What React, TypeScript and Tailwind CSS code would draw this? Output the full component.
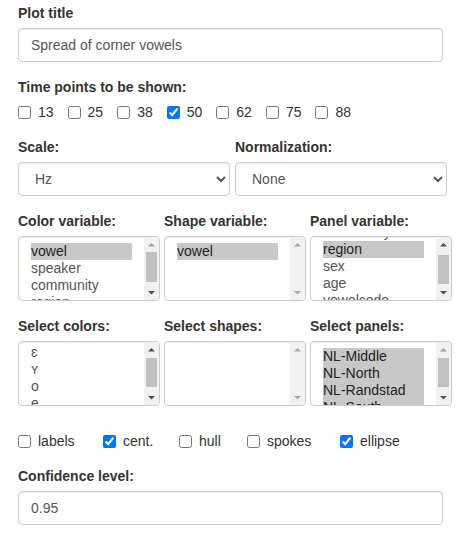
import React from "react";

const timePoints = [
  { v: "13", on: false },
  { v: "25", on: false },
  { v: "38", on: false },
  { v: "50", on: true },
  { v: "62", on: false },
  { v: "75", on: false },
  { v: "88", on: false },
];

const geoms = [
  { label: "labels", on: false, w: "w-[85px]" },
  { label: "cent.", on: true, w: "w-[76px]" },
  { label: "hull", on: false, w: "w-[68px]" },
  { label: "spokes", on: false, w: "w-[93px]" },
  { label: "ellipse", on: true, w: "" },
];

function Label({ children }: { children: React.ReactNode }) {
  return <div className="mb-[5px] text-[14px] leading-5 font-bold text-[#333]">{children}</div>;
}

function Arrow({ up, on }: { up: boolean; on: boolean }) {
  return (
    <svg width="15" height="15" viewBox="0 0 15 15" className="block shrink-0">
      <polygon
        points={up ? "4,9.5 11,9.5 7.5,6" : "4,6 11,6 7.5,9.5"}
        fill={on ? "#505050" : "#a3a3a3"}
      />
    </svg>
  );
}

type ListProps = {
  items: string[];
  selected: string[];
  shift?: string;
  thumb?: string;
  upOn?: boolean;
  downOn?: boolean;
};

function ListBox({ items, selected, shift = "", thumb, upOn = false, downOn = false }: ListProps) {
  return (
    <div className="flex h-[65px] w-[142px] overflow-hidden rounded border border-[#ccc] bg-white shadow-[inset_0_1px_1px_rgba(0,0,0,0.075)]">
      <div className="flex-1 overflow-hidden px-3 pt-1.5">
        <div className={shift}>
          {items.map((it) => {
            const sel = selected.includes(it);
            return (
              <div
                key={it}
                className={`h-[17px] whitespace-nowrap text-[14px] leading-4 ${sel ? "bg-[#c8c8c8] text-[#222]" : "text-[#555]"}`}
              >
                {it}
              </div>
            );
          })}
        </div>
      </div>
      {/* scrollbar */}
      <div className="flex w-[15px] flex-col bg-[#f1f1f1]">
        <Arrow up on={upOn} />
        <div className="flex-1 px-[2px]">
          {thumb && <div className={`bg-[#c1c1c1] ${thumb}`} />}
        </div>
        <Arrow up={false} on={downOn} />
      </div>
    </div>
  );
}

const inputCls =
  "h-[34px] rounded border border-[#ccc] bg-white px-3 text-[14px] leading-5 text-[#555] shadow-[inset_0_1px_1px_rgba(0,0,0,0.075)]";

export default function App() {
  return (
    <div className="min-h-screen bg-white pl-[18px] pt-[3px] font-['Liberation_Sans','DejaVu_Sans',Arial,sans-serif] text-[14px] text-[#333]">
      <Label>Plot title</Label>
      <input className={`${inputCls} block w-[425px]`} defaultValue="Spread of corner vowels" />

      <div className="mt-[15px]">
        <Label>Time points to be shown:</Label>
        <div className="flex h-5 items-center gap-[14px]">
          {timePoints.map((t) => (
            <label key={t.v} className="flex items-center gap-[7px] leading-5">
              <input type="checkbox" defaultChecked={t.on} className="m-0 h-[13px] w-[13px]" />
              <span>{t.v}</span>
            </label>
          ))}
        </div>
      </div>

      <div className="mt-[15px] flex gap-[5px]">
        <div className="w-[212px]">
          <Label>Scale:</Label>
          <select className={`${inputCls} block w-[212px]`} defaultValue="Hz">
            <option>Hz</option>
            <option>Bark</option>
            <option>ERB</option>
          </select>
        </div>
        <div className="w-[212px]">
          <Label>Normalization:</Label>
          <select className={`${inputCls} block w-[212px]`} defaultValue="None">
            <option>None</option>
            <option>Lobanov</option>
            <option>Nearey</option>
          </select>
        </div>
      </div>

      <div className="mt-[15px] grid grid-cols-[146px_146px_146px]">
        <div>
          <Label>Color variable:</Label>
          <ListBox
            items={["vowel", "speaker", "community", "region", "sex"]}
            selected={["vowel"]}
            thumb="mt-0 h-[30px]"
            downOn
          />
        </div>
        <div>
          <Label>Shape variable:</Label>
          <ListBox items={["vowel"]} selected={["vowel"]} />
        </div>
        <div>
          <Label>Panel variable:</Label>
          <ListBox
            items={["speaker", "community", "region", "sex", "age", "vowelcode"]}
            selected={["region"]}
            shift="-mt-[36px]"
            thumb="mt-[3px] h-[29px]"
            upOn
            downOn
          />
        </div>
      </div>

      <div className="mt-[15px] grid grid-cols-[146px_146px_146px]">
        <div>
          <Label>Select colors:</Label>
          <ListBox
            items={["ɛ", "ʏ", "o", "e", "i", "u"]}
            selected={[]}
            shift="-mt-[4px]"
            thumb="mt-[1px] h-[29px]"
            upOn
            downOn
          />
        </div>
        <div>
          <Label>Select shapes:</Label>
          <ListBox items={[]} selected={[]} />
        </div>
        <div>
          <Label>Select panels:</Label>
          <ListBox
            items={["NL-Middle", "NL-North", "NL-Randstad", "NL-South", "VL-Brabant"]}
            selected={["NL-Middle", "NL-North", "NL-Randstad", "NL-South"]}
            thumb="mt-[1px] h-[29px]"
            downOn
          />
        </div>
      </div>

      <div className="mt-[25px] flex h-5 items-center">
        {geoms.map((g) => (
          <label key={g.label} className={`flex items-center gap-[7px] leading-5 ${g.w}`}>
            <input type="checkbox" defaultChecked={g.on} className="m-0 h-[13px] w-[13px]" />
            <span>{g.label}</span>
          </label>
        ))}
      </div>

      <div className="mt-[15px]">
        <Label>Confidence level:</Label>
        <input className={`${inputCls} block w-[425px]`} defaultValue="0.95" />
      </div>
    </div>
  );
}
